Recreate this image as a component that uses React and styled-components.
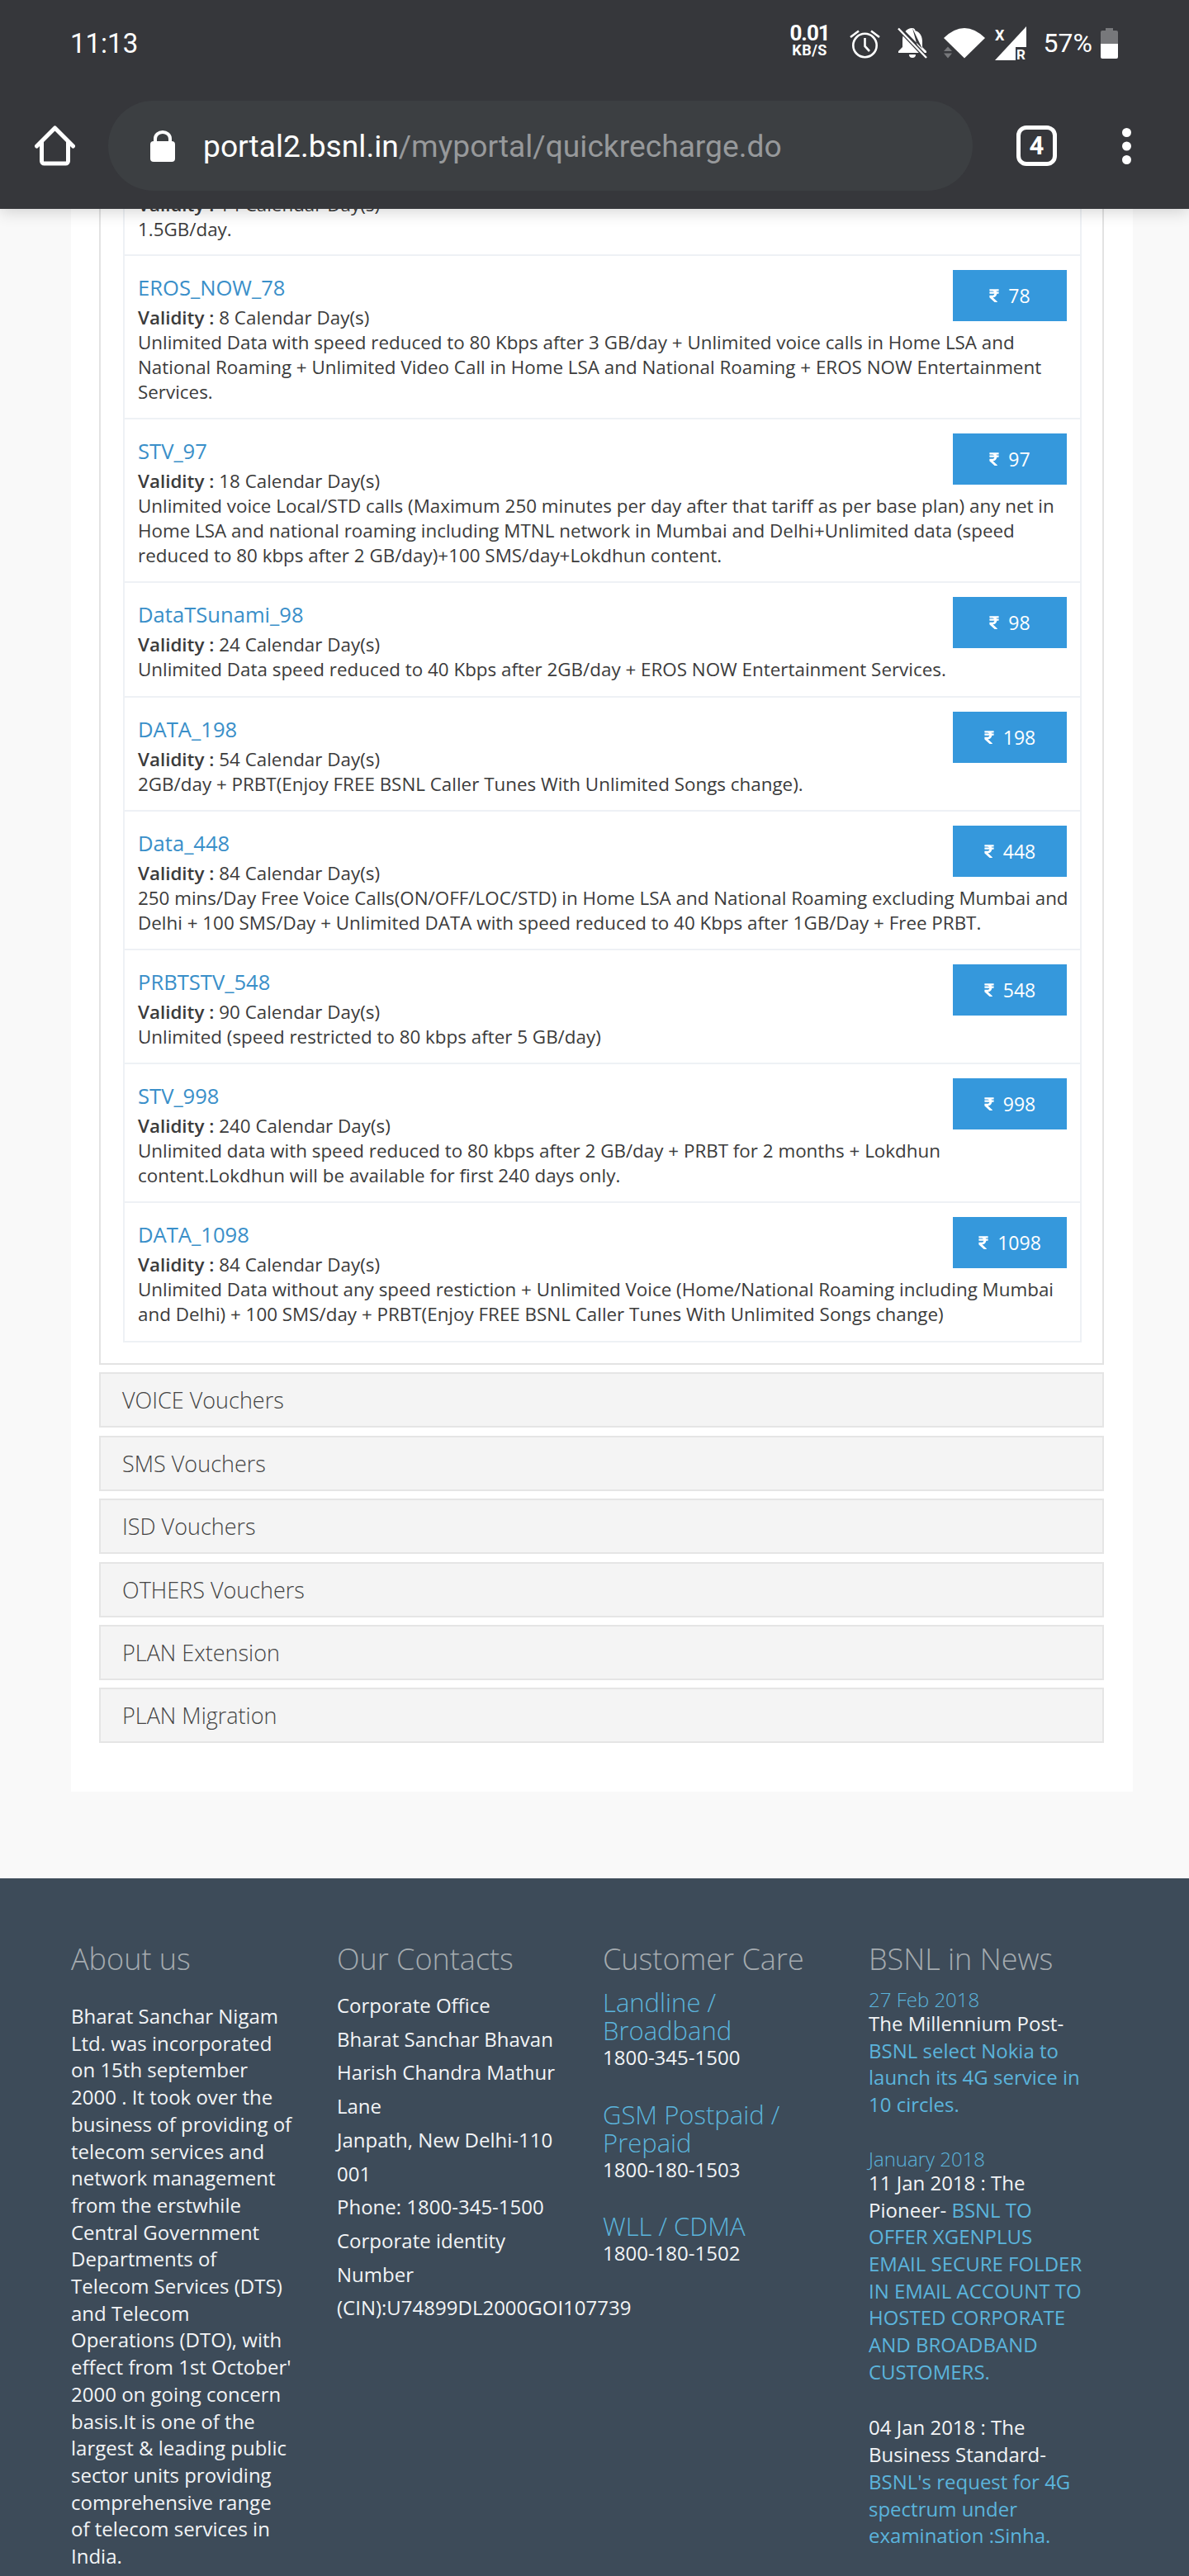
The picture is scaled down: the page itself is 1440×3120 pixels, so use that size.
import React from 'react';
import styled, { createGlobalStyle } from 'styled-components';
import { FaRupeeSign } from 'react-icons/fa';

const GlobalStyle = createGlobalStyle`
  html, body {
    margin: 0;
    padding: 0;
    background: #f9f9f9;
  }
  body {
    font-family: "Open Sans", "Liberation Sans", sans-serif;
    color: #333;
  }
`;

const Page = styled.div`
  width: 1440px;
  height: 3120px;
  overflow: hidden;
`;

// Phone chrome
const TopBar = styled.header`
  position: relative;
  z-index: 2;
  height: 253px;
  background: #36373b;
  box-shadow: 0 4px 18px rgba(0, 0, 0, 0.16);
  font-family: Roboto, sans-serif;
  color: #fff;
`;

const StatusBar = styled.div`
  height: 104px;
  display: flex;
  align-items: center;
  padding: 0 86px 0 85px;
`;

const Clock = styled.div`
  font-size: 33px;
  margin-right: auto;
`;

const Speed = styled.div`
  width: 46px;
  margin: 0 25px 6px 0;
  display: flex;
  flex-direction: column;
  align-items: center;
  font-weight: 700;
`;

const SpeedValue = styled.span`
  font-size: 26px;
  line-height: 24px;
  letter-spacing: -1px;
`;

const SpeedUnit = styled.span`
  font-size: 18px;
  line-height: 18px;
  letter-spacing: 0.5px;
`;

const StatusIcon = styled.svg`
  display: block;
  flex: none;
  overflow: visible;
  margin-right: ${(p) => p.$gap}px;
`;

const Percent = styled.div`
  font-size: 32px;
  margin-right: 10px;
`;

const NavBar = styled.div`
  height: 109px;
  margin-top: 18px;
  display: flex;
  align-items: center;
  padding-left: 42px;
`;

const UrlPill = styled.div`
  width: 1047px;
  height: 109px;
  margin: 0 53px 0 40px;
  padding-left: 51px;
  box-sizing: border-box;
  border-radius: 55px;
  background: #3c3f42;
  display: flex;
  align-items: center;
`;

const UrlText = styled.div`
  margin-left: 34px;
  font-size: 37.2px;
  color: #fff;
  white-space: nowrap;
`;

const UrlPath = styled.span`
  color: #97999b;
`;

const TabCount = styled.div`
  width: 49px;
  height: 49px;
  box-sizing: border-box;
  border: 5px solid #fff;
  border-radius: 12px;
  display: flex;
  align-items: center;
  justify-content: center;
  font-size: 31px;
  font-weight: 700;
`;

const MenuDots = styled.svg`
  display: block;
  margin-left: 79px;
`;

// Plans
const Content = styled.main`
  width: 1286px;
  height: 1917px;
  margin-left: 86px;
  padding: 0 35px 0 34px;
  box-sizing: border-box;
  background: #fff;
`;

const PlanPanel = styled.section`
  display: flow-root;
  height: 1400px;
  box-sizing: border-box;
  padding: 0 25px 0 27px;
  border: 2px solid #e3e3e3;
  border-top: 0;
`;

const PlanList = styled.div`
  border: 2px solid #eef1f5;
  border-top: 0;
`;

const PlanRow = styled.div`
  padding: ${(p) => (p.$clipped ? '0 10px 15px 16px' : '18px 10px 16.2px 16px')};
  margin-top: ${(p) => (p.$clipped ? '-20px' : '0')};
  border-bottom: 2px solid #eef1f5;
  font-size: 22.4px;
  line-height: 30px;
  color: #3b3b3b;

  &:last-child {
    border-bottom: 0;
  }
`;

const PlanTitle = styled.div`
  font-size: 25.6px;
  line-height: 42px;
  color: #3a8fc9;
`;

const PlanMeta = styled.div`
  b {
    font-weight: 600;
  }
`;

const PriceButton = styled.div`
  float: right;
  width: 138px;
  height: 62px;
  margin: -1px 6px 0 12px;
  background: #3598dc;
  color: #fff;
  font-size: 23px;
  display: flex;
  align-items: center;
  justify-content: center;
  gap: 11px;

  svg {
    width: 12px;
    height: 18px;
  }
`;

const Accordion = styled.div`
  height: 67px;
  margin-top: 9.4px;
  box-sizing: border-box;
  border: 2px solid #e5e5e5;
  background: #f4f4f4;
  padding-left: 26px;
  font-size: 27px;
  font-weight: 300;
  line-height: 63px;
  color: #444;
`;

// Footer
const Footer = styled.footer`
  margin-top: 105px;
  padding: 75px 0 0 86px;
  height: 900px;
  background: #3d4b59;
  display: grid;
  grid-template-columns: repeat(4, 322px);
  align-items: start;
  font-size: 24px;
  line-height: 32.7px;
  color: #f2f4f6;
`;

const FooterCol = styled.div`
  padding-right: 51.5px;
`;

const FooterHeading = styled.h3`
  margin: 0 0 ${(p) => p.$gap}px;
  font-size: 36px;
  line-height: 46px;
  font-weight: 300;
  color: #a5abb0;
  white-space: nowrap;
`;

const ContactLine = styled.div`
  line-height: 40.7px;
`;

const NoWrap = styled.span`
  white-space: nowrap;
`;

const CareBlock = styled.div`
  margin-bottom: 35px;
`;

const CareTitle = styled.div`
  font-size: 31px;
  line-height: 34px;
  font-weight: 300;
  color: #5bb4dc;
`;

const NewsBlock = styled.div`
  margin-bottom: 35px;
`;

const NewsDate = styled.div`
  font-size: 24px;
  line-height: 27px;
  font-weight: 300;
  color: #5bb4dc;
`;

const NewsLink = styled.span`
  color: #5bb4dc;
`;

const HomeIcon = () => (
  <svg width="49" height="49" viewBox="0 0 49 49" fill="none" stroke="#fff" strokeWidth="5" strokeLinecap="round" strokeLinejoin="round">
    <path d="M2.5 25 L24.5 3 L46.5 25" />
    <path d="M8.5 20 V43 a3 3 0 0 0 3 3 H37.5 a3 3 0 0 0 3 -3 V20" />
  </svg>
);

const LockIcon = () => (
  <svg width="30" height="38" viewBox="0 0 30 38" style={{ flex: 'none' }}>
    <path d="M6 15 V10 a9 8 0 0 1 18 0 V15" fill="none" stroke="#fff" strokeWidth="4" />
    <rect x="0" y="13" width="30" height="25" rx="4" fill="#fff" />
  </svg>
);

const plans = [
  {
    name: 'EROS_NOW_78',
    price: '78',
    days: '8',
    text: 'Unlimited Data with speed reduced to 80 Kbps after 3 GB/day + Unlimited voice calls in Home LSA and National Roaming + Unlimited Video Call in Home LSA and National Roaming + EROS NOW Entertainment Services.',
  },
  {
    name: 'STV_97',
    price: '97',
    days: '18',
    text: 'Unlimited voice Local/STD calls (Maximum 250 minutes per day after that tariff as per base plan) any net in Home LSA and national roaming including MTNL network in Mumbai and Delhi+Unlimited data (speed reduced to 80 kbps after 2 GB/day)+100 SMS/day+Lokdhun content.',
  },
  {
    name: 'DataTSunami_98',
    price: '98',
    days: '24',
    text: 'Unlimited Data speed reduced to 40 Kbps after 2GB/day + EROS NOW Entertainment Services.',
  },
  {
    name: 'DATA_198',
    price: '198',
    days: '54',
    text: '2GB/day + PRBT(Enjoy FREE BSNL Caller Tunes With Unlimited Songs change).',
  },
  {
    name: 'Data_448',
    price: '448',
    days: '84',
    text: '250 mins/Day Free Voice Calls(ON/OFF/LOC/STD) in Home LSA and National Roaming excluding Mumbai and Delhi + 100 SMS/Day + Unlimited DATA with speed reduced to 40 Kbps after 1GB/Day + Free PRBT.',
  },
  {
    name: 'PRBTSTV_548',
    price: '548',
    days: '90',
    text: 'Unlimited (speed restricted to 80 kbps after 5 GB/day)',
  },
  {
    name: 'STV_998',
    price: '998',
    days: '240',
    text: 'Unlimited data with speed reduced to 80 kbps after 2 GB/day + PRBT for 2 months + Lokdhun content.Lokdhun will be available for first 240 days only.',
  },
  {
    name: 'DATA_1098',
    price: '1098',
    days: '84',
    text: 'Unlimited Data without any speed restiction + Unlimited Voice (Home/National Roaming including Mumbai and Delhi) + 100 SMS/day + PRBT(Enjoy FREE BSNL Caller Tunes With Unlimited Songs change)',
  },
];

const vouchers = ['VOICE Vouchers', 'SMS Vouchers', 'ISD Vouchers', 'OTHERS Vouchers', 'PLAN Extension', 'PLAN Migration'];

const contacts = [
  'Corporate Office',
  'Bharat Sanchar Bhavan',
  'Harish Chandra Mathur Lane',
  'Janpath, New Delhi-110 001',
  'Phone: 1800-345-1500',
  'Corporate identity Number',
];

const care = [
  { title: 'Landline / Broadband', phone: '1800-345-1500' },
  { title: 'GSM Postpaid / Prepaid', phone: '1800-180-1503' },
  { title: 'WLL / CDMA', phone: '1800-180-1502' },
];

const App = () => (
  <Page>
    <GlobalStyle />
    <TopBar>
      <StatusBar>
        <Clock>11:13</Clock>
        <Speed>
          <SpeedValue>0.01</SpeedValue>
          <SpeedUnit>KB/S</SpeedUnit>
        </Speed>
        {/* alarm */}
        <StatusIcon $gap={21} width="37" height="37" viewBox="0 0 37 37" fill="none" stroke="#fff" strokeWidth="2.6">
          <circle cx="18.5" cy="21" r="14.2" />
          <path d="M18.5 12 V22 L24 28" />
          <path d="M1 11 L11 3.5 M36 11 L26 3.5" />
        </StatusIcon>
        {/* muted bell */}
        <StatusIcon $gap={20} width="36" height="36" viewBox="0 0 36 36">
          <path d="M18 0 c2 0 3.5 1.5 3.5 3.2 C28 5 30 11 30 16 v7 l5 5 v2 H1 v-2 l5 -5 v-9 c0 -3 0.5 -5 2 -7 L26 29 Z M18 0 C14 0 11 2 9.5 4 L30 25 Z" fill="#fff" />
          <path d="M14 32 h8 a4 4 0 0 1 -8 0 Z" fill="#fff" />
          <path d="M2 1 L34 35" stroke="#36373b" strokeWidth="5" />
          <path d="M1 0.5 L35 36" stroke="#fff" strokeWidth="2.4" />
        </StatusIcon>
        {/* wifi */}
        <StatusIcon $gap={12} width="50" height="37" viewBox="0 0 50 37">
          <path d="M25 36.5 L0 12 Q25 -12 50 12 Z" fill="#fff" />
          <path d="M0 28 L5 22.5 L10 28 Z M0 30.5 H10 L5 36.5 Z" fill="#77787b" />
        </StatusIcon>
        {/* signal with roaming and X */}
        <StatusIcon $gap={21} width="38" height="41" viewBox="0 0 38 41">
          <path d="M38 0 V41 H0 Z" fill="#fff" />
          <rect x="25" y="25" width="13" height="16" fill="#36373b" />
          <text x="31.5" y="40" fontFamily="Roboto, sans-serif" fontSize="17" fontWeight="700" fill="#fff" textAnchor="middle">R</text>
          <text x="0" y="17" fontFamily="Roboto, sans-serif" fontSize="18" fontWeight="700" fill="#fff">X</text>
        </StatusIcon>
        <Percent>57%</Percent>
        {/* battery */}
        <StatusIcon $gap={0} width="21" height="37" viewBox="0 0 21 37">
          <path d="M6 0 H15 V3 H19 a2 2 0 0 1 2 2 V19 H0 V5 a2 2 0 0 1 2 -2 H6 Z" fill="#77787b" />
          <path d="M0 19 H21 V35 a2 2 0 0 1 -2 2 H2 a2 2 0 0 1 -2 -2 Z" fill="#fff" />
        </StatusIcon>
      </StatusBar>
      <NavBar>
        <HomeIcon />
        <UrlPill>
          <LockIcon />
          <UrlText>
            portal2.bsnl.in<UrlPath>/myportal/quickrecharge.do</UrlPath>
          </UrlText>
        </UrlPill>
        <TabCount>4</TabCount>
        <MenuDots width="11" height="44" viewBox="0 0 11 44" fill="#fff">
          <circle cx="5.5" cy="5.5" r="5.5" />
          <circle cx="5.5" cy="22" r="5.5" />
          <circle cx="5.5" cy="38.5" r="5.5" />
        </MenuDots>
      </NavBar>
    </TopBar>

    <Content>
      <PlanPanel>
        <PlanList>
          <PlanRow $clipped>
            <PlanMeta>
              <b>Validity :</b> 14 Calendar Day(s)
            </PlanMeta>
            <div>1.5GB/day.</div>
          </PlanRow>
          {plans.map((plan) => (
            <PlanRow key={plan.name}>
              <PriceButton>
                <FaRupeeSign />
                {plan.price}
              </PriceButton>
              <PlanTitle>{plan.name}</PlanTitle>
              <PlanMeta>
                <b>Validity :</b> {plan.days} Calendar Day(s)
              </PlanMeta>
              <div>{plan.text}</div>
            </PlanRow>
          ))}
        </PlanList>
      </PlanPanel>
      {vouchers.map((label) => (
        <Accordion key={label}>{label}</Accordion>
      ))}
    </Content>

    <Footer>
      <FooterCol>
        <FooterHeading $gap={30}>About us</FooterHeading>
        Bharat Sanchar Nigam Ltd. was incorporated on 15th september 2000 . It took over the business of providing of telecom services and network management from the erstwhile Central Government Departments of Telecom Services (DTS) and Telecom Operations (DTO), with effect from 1st October' 2000 on going concern basis.It is one of the largest &amp; leading public sector units providing comprehensive range of telecom services in India.
      </FooterCol>
      <FooterCol>
        <FooterHeading $gap={13}>Our Contacts</FooterHeading>
        {contacts.map((line) => (
          <ContactLine key={line}>{line}</ContactLine>
        ))}
        <ContactLine>
          <NoWrap>(CIN):U74899DL2000GOI107739</NoWrap>
        </ContactLine>
      </FooterCol>
      <FooterCol>
        <FooterHeading $gap={12}>Customer Care</FooterHeading>
        {care.map((item) => (
          <CareBlock key={item.title}>
            <CareTitle>{item.title}</CareTitle>
            {item.phone}
          </CareBlock>
        ))}
      </FooterCol>
      <FooterCol>
        <FooterHeading $gap={12}>BSNL in News</FooterHeading>
        <NewsBlock>
          <NewsDate>27 Feb 2018</NewsDate>
          The Millennium Post- <NewsLink>BSNL select Nokia to launch its 4G service in 10 circles.</NewsLink>
        </NewsBlock>
        <NewsBlock>
          <NewsDate>January 2018</NewsDate>
          11 Jan 2018 : The Pioneer- <NewsLink>BSNL TO OFFER XGENPLUS EMAIL SECURE FOLDER IN EMAIL ACCOUNT TO HOSTED CORPORATE AND BROADBAND CUSTOMERS.</NewsLink>
        </NewsBlock>
        <NewsBlock>
          04 Jan 2018 : The Business Standard- <NewsLink>BSNL's request for 4G spectrum under examination :Sinha.</NewsLink>
        </NewsBlock>
      </FooterCol>
    </Footer>
  </Page>
);

export default App;
